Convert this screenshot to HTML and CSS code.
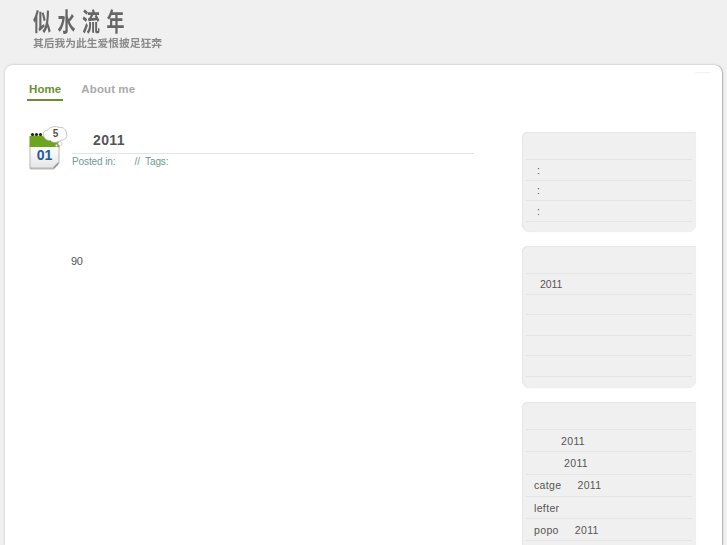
FILE: index.html
```html
<!DOCTYPE html>
<html lang="zh">
<head>
<meta charset="utf-8">
<title>似水流年</title>
<link rel="stylesheet" href="styles.css">
</head>
<body>
<header class="site-header">
  <div class="logo">似水流年</div>
  <div class="tagline">其后我为此生爱恨披足狂奔</div>
</header>
<main class="card">
  <span class="corner-mark"></span>
  <nav class="nav">
    <a class="nav-item active">Home</a>
    <a class="nav-item">About me</a>
  </nav>
  <div class="content">
    <article class="post">
      <svg class="cal" width="40" height="46" viewBox="0 0 40 46" aria-hidden="true">
        <defs>
          <linearGradient id="pg" x1="0" y1="0" x2="0" y2="1"><stop offset="0" stop-color="#ffffff"/><stop offset="1" stop-color="#e6e6e6"/></linearGradient>
        </defs>
        <path d="M0.5 20 H30.5 V37 L25 43.5 H2 Q0.5 43.5 0.5 42 Z" fill="#b8b8b8"/>
        <path d="M1.5 21 H29.5 V36 L24 41.5 H3 Q1.5 41.5 1.5 40 Z" fill="url(#pg)"/>
        <path d="M24 41.5 L29.5 36 L29 39 L25.5 42 Z" fill="#9a9a9a"/>
        <path d="M0.5 10 L5 9.5 L8 10 L12 9.5 L17 11 L22 14 L30.5 15 V21 H0.5 Z" fill="#6ea51f"/>
        <circle cx="3.5" cy="8.5" r="1.6" fill="#222"/>
        <circle cx="7.5" cy="8.5" r="1.6" fill="#222"/>
        <circle cx="11.5" cy="8.5" r="1.6" fill="#222"/>
        <path d="M14.5 9 C14 6 16 4 19 4 C20 1 27 -0.5 30 1.5 C34 0.5 38 4 37.5 8 C39 11 35 15 32 14 C29 17 23 17 21.5 14.5 C18 15 14.5 12 14.5 9 Z" fill="#fff" stroke="#b5b5b5" stroke-width="0.8"/>
        <circle cx="31" cy="17.5" r="2" fill="#fff" stroke="#b5b5b5" stroke-width="0.6"/>
        <circle cx="27.5" cy="19.5" r="1" fill="#fff" stroke="#b5b5b5" stroke-width="0.5"/>
        <text class="cal-count" x="26.5" y="11" text-anchor="middle">5</text>
        <text class="cal-day" x="15.5" y="34" text-anchor="middle">01</text>
      </svg>
      <div class="post-body">
        <h1 class="post-title">2011</h1>
        <p class="meta"><span>Posted in:</span><span class="meta-tags">//&nbsp; Tags:</span></p>
        <p class="post-text">90</p>
      </div>
    </article>
    <aside class="sidebar">
      <section class="box box-a">
        <div class="box-head"></div>
        <ul class="rows rows-a">
          <li><span class="indent-a">:</span></li>
          <li><span class="indent-a">:</span></li>
          <li><span class="indent-a">:</span></li>
        </ul>
      </section>
      <section class="box box-b">
        <div class="box-head"></div>
        <ul class="rows rows-a">
          <li><span class="indent-b">2011</span></li>
          <li></li><li></li><li></li><li></li>
        </ul>
      </section>
      <section class="box box-c">
        <div class="box-head"></div>
        <ul class="rows rows-c">
          <li><span class="ind-1">2011</span></li>
          <li><span class="ind-2">2011</span></li>
          <li><span class="name n1">catge</span><span>2011</span></li>
          <li><span class="name">lefter</span></li>
          <li><span class="name n2">popo</span><span>2011</span></li>
          <li></li>
        </ul>
      </section>
    </aside>
  </div>
</main>
</body>
</html>
```

FILE: styles.css
```css
html, body { margin: 0; padding: 0; height: 100%; overflow: hidden; }
body {
  background: #f0f0f0;
  font-family: "Liberation Sans", Arial, "Noto Sans CJK SC", sans-serif;
  color: #555;
  display: flex;
  flex-direction: column;
}
.site-header { height: 65px; flex: none; padding-left: 33px; box-sizing: border-box; }
.logo {
  font-family: "Noto Sans CJK SC", sans-serif;
  font-weight: 700;
  font-size: 18px;
  line-height: 24px;
  letter-spacing: 6.5px;
  color: #666;
  padding-top: 7px;
  transform: scaleY(1.38);
  transform-origin: 0 50%;
  filter: blur(0.4px);
}
.tagline {
  font-family: "Noto Sans CJK SC", sans-serif;
  font-weight: 700;
  font-size: 10.75px;
  line-height: 14px;
  margin-top: 5px;
  color: #8a8a8a;
  filter: blur(0.3px);
}
.card {
  position: relative;
  flex: 1;
  margin: 0 5px 0 5px;
  background: #fff;
  border-radius: 8px 8px 0 0;
  box-shadow: 0 0 3px rgba(0,0,0,.18), 1px 0 1px rgba(0,0,0,.2);
  min-height: 0;
}
.corner-mark {
  position: absolute;
  left: 690px;
  top: 7px;
  width: 16px;
  height: 1px;
  background: #f2f2f2;
}
.nav { display: flex; gap: 16px; padding: 17px 0 0 22px; }
.nav-item {
  font-size: 11.5px;
  letter-spacing: .1px;
  font-weight: 700;
  line-height: 15px;
  color: #aaa;
  padding: 0 2px 2px;
  border-bottom: 2px solid transparent;
}
.nav-item.active { color: #6b8e32; border-bottom-color: #6b8e32; }
.content { display: flex; padding: 25px 0 0 24px; }
.post { display: flex; width: 445px; flex: none; align-items: flex-start; margin-right: 48px; }
.cal { flex: none; display: block; margin-right: 3px; overflow: visible; }
.cal-count { font: 700 10px "Liberation Sans", sans-serif; fill: #555; }
.cal-day { font: 700 14px "Liberation Sans", sans-serif; fill: #1d5aa0; }
.post-body { width: 402px; flex: none; }
.post-title {
  margin: 0;
  padding: 2px 0 1px 21px;
  font-size: 14px;
  letter-spacing: .4px;
  line-height: 24px;
  font-weight: 700;
  color: #555;
  border-bottom: 1px solid #e4e4e4;
}
.meta { margin: 0; font-size: 10px; letter-spacing: -.1px; line-height: 15px; color: #6f9898; }
.meta-tags { margin-left: 19px; }
.post-text { margin: 85px 0 0 -1px; font-size: 11px; line-height: 15px; color: #555; letter-spacing: -0.3px; }
.sidebar { width: 174px; flex: none; display: flex; flex-direction: column; gap: 14px; margin-top: 6px; }
.box {
  background: #f0f0f0;
  border-radius: 6px 0 8px 8px;
  box-shadow: inset 0 1px 1px #e6e6e6, inset 1px 0 1px #e6e6e6, 0 0 1px #e4e4e4;
  padding: 0 4px;
}
.box-a { height: 100px; box-sizing: border-box; }
.box-b { height: 142px; box-sizing: border-box; }
.box-c { height: 170px; box-sizing: border-box; }
.box-head { height: 27px; border-bottom: 1px solid #e4e4e4; }
.rows { list-style: none; margin: 0; padding: 0; }
.rows li {
  border-bottom: 1px solid #e4e4e4;
  font-size: 10.5px;
  color: #555;
  box-sizing: border-box;
  display: flex;
  align-items: center;
}
.rows-a li { height: 20.5px; }
.rows-c li { height: 22.3px; letter-spacing: .35px; }
.indent-a { padding-left: 11px; }
.indent-b { padding-left: 14px; letter-spacing: -.1px; }
.ind-1 { padding-left: 35px; }
.ind-2 { padding-left: 38px; }
.name { padding-left: 8px; }
.n1 { margin-right: 16px; }
.n2 { margin-right: 16px; }
```
